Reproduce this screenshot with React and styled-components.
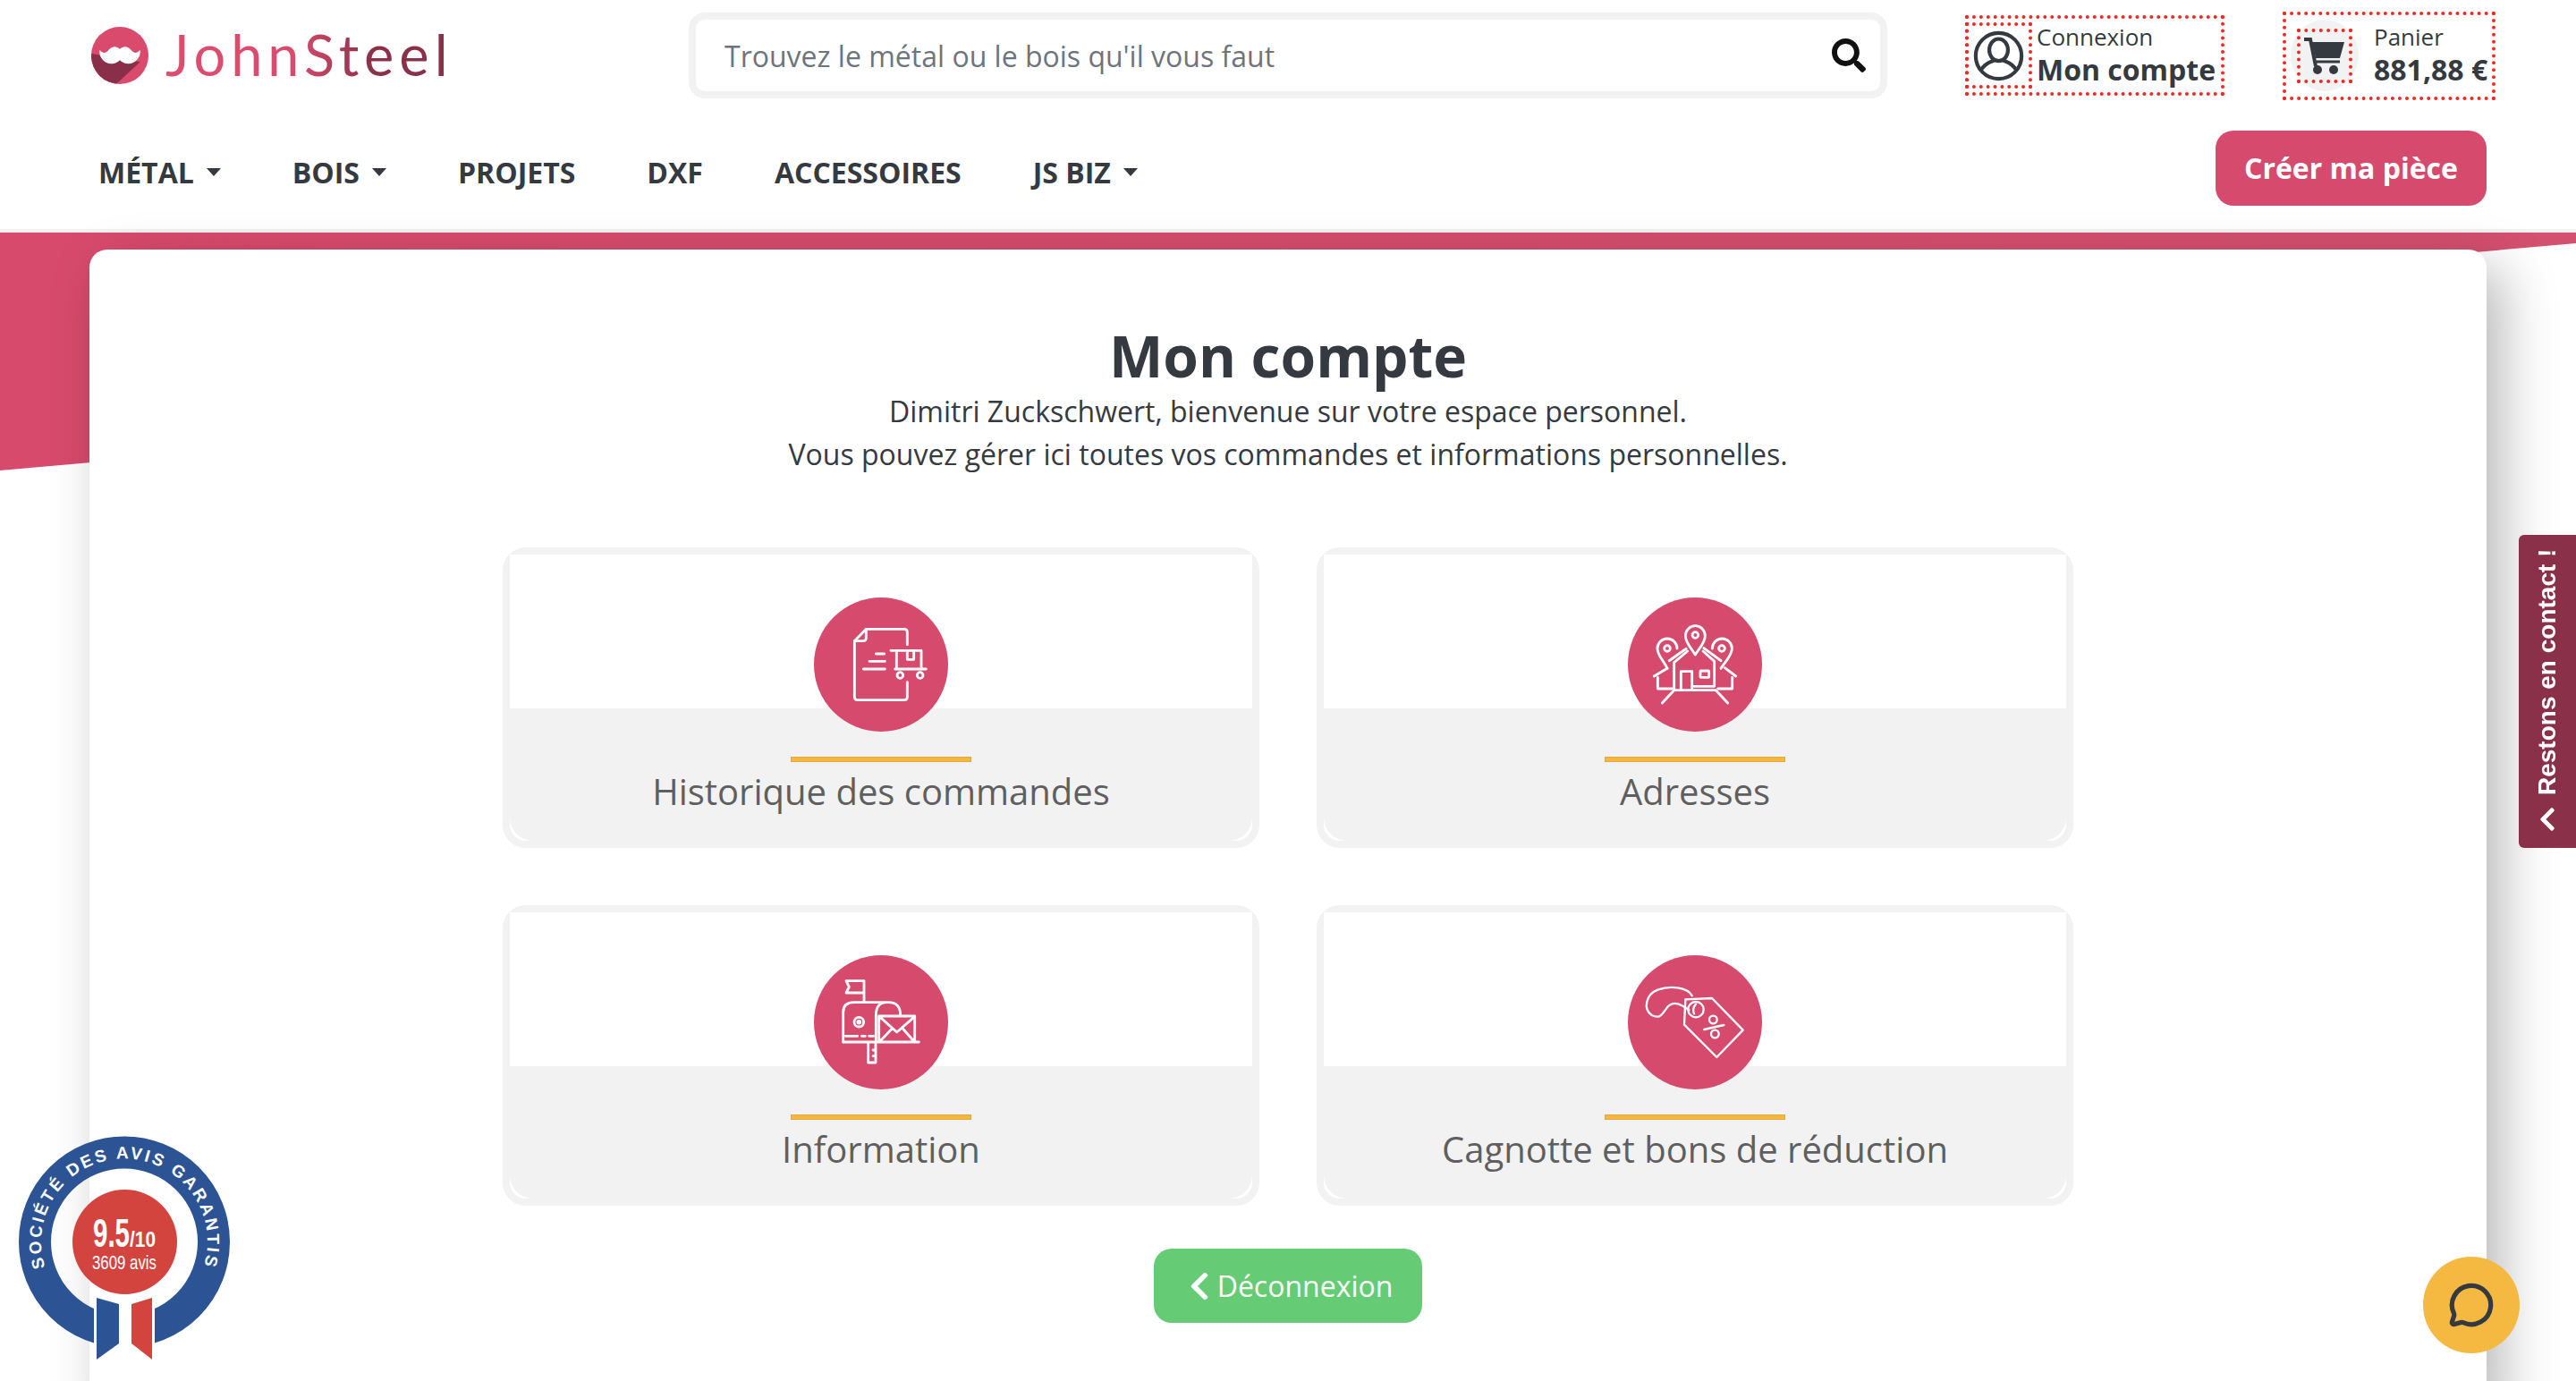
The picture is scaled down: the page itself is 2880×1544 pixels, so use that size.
import React from "react";
import styled, { createGlobalStyle } from "styled-components";
import { FaSearch, FaChevronLeft } from "react-icons/fa";
import { MessageCircle } from "lucide-react";

const Global = createGlobalStyle`
  * { box-sizing: border-box; }
  html, body { margin: 0; padding: 0; background: #fff; }
  body { font-family: "Open Sans", "Liberation Sans", sans-serif; color: #343a40; }
`;

const Page = styled.div`
  position: relative;
  width: 2880px;
  height: 1544px;
  overflow: hidden;
  background: #fff;
`;
const Header = styled.header`
  height: 260px;
  border-bottom: 4px solid #f2f2f2;
  background: #fff;
`;
const TopBar = styled.div`
  display: flex;
  align-items: center;
  height: 124px;
  padding-left: 102px;
`;
const Logo = styled.a`
  display: flex;
  align-items: center;
  gap: 19px;
  width: 668px;
`;
const LogoText = styled.span`
  font-family: "Lato", sans-serif;
  font-weight: 400;
  font-size: 63px;
  line-height: 62px;
  letter-spacing: 6px;
  padding-bottom: 3px;
  background: linear-gradient(90deg, #dd4d70 0%, #d94b6d 45%, #8a3149 72%, #8a3149 100%);
  -webkit-background-clip: text;
  background-clip: text;
  color: transparent;
`;
const Search = styled.div`
  display: flex;
  align-items: center;
  width: 1340px;
  height: 96px;
  border: 8px solid #f2f2f2;
  border-radius: 18px;
  padding: 0 16px 0 30px;
`;
const SearchInput = styled.input`
  flex: 1;
  border: 0;
  outline: 0;
  font: 400 32px "Open Sans", sans-serif;
  background: transparent;
  &::placeholder { color: #6c757d; opacity: 1; }
`;
const Account = styled.a`
  display: flex;
  align-items: center;
  width: 290px;
  height: 90px;
  margin-left: 87px;
  border: 4px dotted #f3281e;
`;
const AccountIcon = styled.span`
  display: flex;
  align-items: center;
  justify-content: center;
  width: 75px;
  height: 74px;
  margin-left: -4px;
  border: 4px dotted #f3281e;
  margin-right: 5px;
`;
const StackedText = styled.span`
  display: flex;
  flex-direction: column;
  padding-bottom: 3px;
  white-space: nowrap;
`;
const SmallLabel = styled.span`
  font-size: 26px;
  font-weight: 400;
  line-height: 34px;
  color: #343a40;
`;
const StrongLabel = styled.span`
  font-size: 32px;
  font-weight: 700;
  line-height: 40px;
  color: #343a40;
`;
const Cart = styled.a`
  display: flex;
  align-items: center;
  width: 238px;
  height: 99px;
  margin-left: 65px;
  padding-left: 5px;
  border: 4px dotted #f3281e;
`;
const CartDisc = styled.span`
  display: flex;
  align-items: center;
  justify-content: center;
  width: 76px;
  height: 80px;
  border-radius: 50%;
  background: #f2f2f2;
  margin-right: 17px;
  flex: none;
`;
const CartIconBox = styled.span`
  display: flex;
  align-items: center;
  justify-content: center;
  flex: none;
  width: 62px;
  height: 61px;
  border: 4px dotted #f3281e;
`;
const NavRow = styled.nav`
  display: flex;
  align-items: center;
  height: 132px;
  padding: 0 100px 0 110px;
`;
const NavList = styled.ul`
  display: flex;
  align-items: center;
  gap: 80px;
  list-style: none;
  margin: 0;
  padding: 5px 0 0;
  flex: 1;
`;
const NavItem = styled.li`
  display: flex;
  align-items: center;
  font-size: 32px;
  font-weight: 700;
  color: #343a40;
  white-space: nowrap;
`;
const Caret = styled.i`
  width: 0;
  height: 0;
  margin-left: 14px;
  border-top: 9px solid #343a40;
  border-left: 8px solid transparent;
  border-right: 8px solid transparent;
`;
const CreateButton = styled.a`
  display: flex;
  align-items: center;
  justify-content: center;
  width: 303px;
  height: 84px;
  margin-top: -5px;
  border-radius: 20px;
  background: #d64b6d;
  color: #fff;
  font-size: 32px;
  font-weight: 700;
`;
const Stage = styled.main`
  position: relative;
  padding: 19px 100px 0;
`;
const PinkWave = styled.div`
  position: absolute;
  left: 0;
  top: 0;
  width: 2880px;
  height: 266px;
  background: linear-gradient(90deg, #d84a6c, #d4506f);
  clip-path: polygon(0 0, 100% 0, 100% 12px, 0 100%);
`;
const Card = styled.section`
  position: relative;
  display: flex;
  flex-direction: column;
  align-items: center;
  height: 1300px;
  padding-top: 87px;
  border-radius: 20px 20px 0 0;
  background: #fff;
  box-shadow: 18px 20px 60px rgba(0, 0, 0, 0.28);
`;
const Title = styled.h1`
  margin: 0;
  font-size: 64px;
  line-height: 64px;
  font-weight: 700;
  color: #343a40;
`;
const Intro = styled.p`
  margin: 6px 0 0;
  font-size: 32px;
  line-height: 48px;
  text-align: center;
  color: #343a40;
`;
const Grid = styled.div`
  display: grid;
  grid-template-columns: 846px 846px;
  grid-auto-rows: 336px;
  gap: 64px;
  margin-top: 80px;
`;
const Tile = styled.a`
  display: block;
  border: 8px solid #f2f2f2;
  border-radius: 26px;
  background: #fff;
`;
const TileBody = styled.div`
  display: flex;
  flex-direction: column;
  align-items: center;
  height: 100%;
  padding-top: 48px;
  border-radius: 0 0 26px 26px;
  background: linear-gradient(#fff 172px, #f2f2f2 172px);
`;
const TileDisc = styled.span`
  display: block;
  width: 150px;
  height: 150px;
  border-radius: 50%;
  background: #d64b6d;
  svg { display: block; }
`;
const TileBar = styled.span`
  width: 202px;
  height: 6px;
  margin-top: 28px;
  background: #f4b740;
  border: 1px solid #e2a93c;
`;
const TileLabel = styled.span`
  margin-top: 5px;
  font-size: 40px;
  line-height: 56px;
  color: #5f5f5f;
`;
const LogoutButton = styled.a`
  display: flex;
  align-items: center;
  justify-content: center;
  gap: 2px;
  width: 300px;
  height: 83px;
  margin-top: 48px;
  border-radius: 20px;
  background: #65cb74;
  color: #fff;
  font-size: 32px;
`;
const ContactTab = styled.a`
  position: absolute;
  right: 0;
  top: 598px;
  display: flex;
  align-items: center;
  gap: 12px;
  width: 64px;
  height: 350px;
  padding: 17px 0 15px;
  justify-content: flex-start;
  writing-mode: vertical-rl;
  transform: rotate(180deg);
  border-radius: 0 6px 6px 0;
  background: #8a3149;
  color: #fff;
  font: 700 28px "Liberation Sans", Arial, sans-serif;
  white-space: nowrap;
`;
const TabChevron = styled.span`
  display: flex;
  transform: rotate(180deg);
  font-size: 30px;
`;
const ChatBubble = styled.a`
  position: absolute;
  left: 2709px;
  top: 1405px;
  display: flex;
  align-items: center;
  justify-content: center;
  width: 108px;
  height: 108px;
  border-radius: 50%;
  background: #f5b841;
  color: #343a40;
`;
const BadgeWrap = styled.div`
  position: absolute;
  left: 0;
  top: 1250px;
  width: 280px;
  height: 294px;
`;

const ICON_VIEW = "90 54 450 450";
const line = { fill: "none", stroke: "#fff", strokeWidth: 8.5, strokeLinecap: "round", strokeLinejoin: "round" };

const OrdersIcon = () => (
  <svg width="150" height="150" viewBox={ICON_VIEW} {...line}>
    <path d="M403 212V170Q403 160 393 160H265L226 200V388Q226 398 236 398H393Q403 398 403 388V338" />
    <path d="M265 160V190Q265 200 255 200H226" />
    <path d="M298 243H326M276 268H328M256 294H328" />
    <path d="M348 232H367V294M367 232H450V294M403 232V262H425V232M362 294H466" />
    <circle cx="379" cy="315" r="10" />
    <circle cx="446" cy="315" r="10" />
  </svg>
);
const AddressIcon = () => (
  <svg width="150" height="150" viewBox={ICON_VIEW} {...line}>
    <path d="M316 246C300 220 283 205 283 182A33 33 0 0 1 349 182C349 205 332 220 316 246Z" />
    <circle cx="316" cy="180" r="10" />
    <path d="M222 292C212 268 189 250 189 225A33 33 0 0 1 255 225" />
    <path d="M226 262L288 230" transform="rotate(-8 257 246)" />
    <circle cx="222" cy="225" r="10" />
    <path d="M402 292C416 268 439 250 439 225A33 33 0 0 0 373 225" />
    <path d="M342 228L405 262" transform="rotate(8 373 245)" />
    <circle cx="405" cy="225" r="10" />
    <path d="M290 234L245 272V365M342 234L380 268V352" />
    <path d="M205 408L245 365H385L425 408" />
    <path d="M268 362V302H305V362M310 352H378" />
    <rect x="333" y="300" width="29" height="22" rx="2" />
    <path d="M178 318L222 292M190 322V360H238M452 318L415 290M440 322V360H392" />
  </svg>
);
const MailIcon = () => (
  <svg width="150" height="150" viewBox={ICON_VIEW} {...line}>
    <path d="M258 210V140H198L208 160L198 180H258" />
    <path d="M188 345V245Q188 212 225 212H340Q380 212 380 255M298 345V255Q298 212 335 212" />
    <circle cx="241" cy="278" r="16" />
    <circle cx="241" cy="278" r="4" />
    <path d="M188 345H300M196 325H236M250 325H262M275 325H290" />
    <path d="M272 348V414H297V348M288 372H297M288 392H297" />
    <path d="M308 345V258H428V342M310 260L368 312L428 260M312 342L352 300M425 342L388 300M304 345H442" />
  </svg>
);
const TagIcon = () => (
  <svg width="150" height="150" viewBox={ICON_VIEW} {...line} strokeWidth="7">
    <path d="M283 202L372 198L476 305L388 396L279 287Z" />
    <circle cx="318" cy="236" r="26" />
    <path d="M305 190C290 160 230 155 190 170C150 185 140 235 170 255C200 270 205 250 225 225C245 205 270 220 295 238" />
    <path d="M318 218C308 228 308 242 312 250" />
    <circle cx="376" cy="270" r="13" />
    <circle cx="382" cy="318" r="13" />
    <path d="M346 303L412 288" />
  </svg>
);

const LogoMark = () => (
  <svg width="64" height="64" viewBox="0 0 62 62">
    <defs>
      <clipPath id="logoClip"><circle cx="31" cy="31" r="31" /></clipPath>
    </defs>
    <g clipPath="url(#logoClip)">
      <rect width="62" height="62" fill="#d94a6c" />
      <path d="M0 29L53 38L27 62H0Z" fill="#8a2f4a" />
      <path d="M31 24C27 20 22 21 19 25C16 29 12 29 9 25C8 33 14 40 22 40C26 40 29 38 31 36C33 38 36 40 40 40C48 40 54 33 53 25C50 29 46 29 43 25C40 21 35 20 31 24Z" fill="#fff" />
    </g>
  </svg>
);

const UserIcon = () => (
  <svg width="57" height="57" viewBox="0 0 60 60" fill="none" stroke="#343a40" strokeWidth="4.4">
    <circle cx="30" cy="30" r="27" />
    <ellipse cx="30" cy="23" rx="11" ry="13" />
    <path d="M9 47C15 37 22 37 25 35M51 47C45 37 38 37 35 35" />
  </svg>
);

const CartGlyph = () => (
  <svg width="46" height="41" viewBox="0 0 46 41">
    <path d="M0 2H7L13 32" fill="none" stroke="#343a40" strokeWidth="4" />
    <path d="M9 5H45L40 23H13Z" fill="#343a40" />
    <path d="M14 27H40" stroke="#343a40" strokeWidth="3" />
    <circle cx="15" cy="36" r="5" fill="#343a40" />
    <circle cx="33" cy="36" r="5" fill="#343a40" />
  </svg>
);

const ReviewBadge = () => (
  <svg width="280" height="294" viewBox="0 0 280 294">
    <defs>
      <path id="ringPath" d="M79.2 209.7A93 93 0 1 1 198.8 209.7" />
    </defs>
    <circle cx="139" cy="138.5" r="100" fill="none" stroke="#2c5495" strokeWidth="36" />
    <rect x="105" y="190" width="68" height="70" fill="#fff" />
    <text fontFamily="Liberation Sans, sans-serif" fontWeight="700" fontSize="19" fill="#fff" letterSpacing="2.8">
      <textPath href="#ringPath" startOffset="50%" textAnchor="middle">SOCIÉTÉ DES AVIS GARANTIS</textPath>
    </text>
    <circle cx="139.5" cy="138.5" r="58.5" fill="#d3443f" />
    <text x="104" y="144" fontFamily="Liberation Sans, sans-serif" fontWeight="700" fontSize="44" fill="#fff" textLength="41" lengthAdjust="spacingAndGlyphs">9.5</text>
    <text x="145" y="144" fontFamily="Liberation Sans, sans-serif" fontWeight="700" fontSize="23" fill="#fff" textLength="29" lengthAdjust="spacingAndGlyphs">/10</text>
    <text x="103" y="169" fontFamily="Liberation Sans, sans-serif" fontSize="22" fill="#fff" textLength="72" lengthAdjust="spacingAndGlyphs">3609 avis</text>
    <path d="M108 201L133 208V252L108 270Z" fill="#2c5495" />
    <path d="M147 208L170 201V270L147 252Z" fill="#d3443f" />
  </svg>
);

const tiles = [
  { label: "Historique des commandes", Icon: OrdersIcon },
  { label: "Adresses", Icon: AddressIcon },
  { label: "Information", Icon: MailIcon },
  { label: "Cagnotte et bons de réduction", Icon: TagIcon },
];
const nav = [
  { label: "MÉTAL", caret: true },
  { label: "BOIS", caret: true },
  { label: "PROJETS" },
  { label: "DXF" },
  { label: "ACCESSOIRES" },
  { label: "JS BIZ", caret: true },
];

export default function App() {
  return (
    <Page>
      <Global />
      <Header>
        <TopBar>
          <Logo>
            <LogoMark />
            <LogoText>JohnSteel</LogoText>
          </Logo>
          <Search>
            <SearchInput placeholder="Trouvez le métal ou le bois qu'il vous faut" />
            <FaSearch size={38} color="#111" />
          </Search>
          <Account>
            <AccountIcon><UserIcon /></AccountIcon>
            <StackedText>
              <SmallLabel>Connexion</SmallLabel>
              <StrongLabel>Mon compte</StrongLabel>
            </StackedText>
          </Account>
          <Cart>
            <CartDisc>
              <CartIconBox><CartGlyph /></CartIconBox>
            </CartDisc>
            <StackedText>
              <SmallLabel>Panier</SmallLabel>
              <StrongLabel>881,88 €</StrongLabel>
            </StackedText>
          </Cart>
        </TopBar>
        <NavRow>
          <NavList>
            {nav.map((n) => (
              <NavItem key={n.label}>
                {n.label}
                {n.caret && <Caret />}
              </NavItem>
            ))}
          </NavList>
          <CreateButton>Créer ma pièce</CreateButton>
        </NavRow>
      </Header>
      <Stage>
        <PinkWave />
        <Card>
          <Title>Mon compte</Title>
          <Intro>
            Dimitri Zuckschwert, bienvenue sur votre espace personnel.
            <br />
            Vous pouvez gérer ici toutes vos commandes et informations personnelles.
          </Intro>
          <Grid>
            {tiles.map(({ label, Icon }) => (
              <Tile key={label}>
                <TileBody>
                  <TileDisc><Icon /></TileDisc>
                  <TileBar />
                  <TileLabel>{label}</TileLabel>
                </TileBody>
              </Tile>
            ))}
          </Grid>
          <LogoutButton>
            <FaChevronLeft size={36} />
            Déconnexion
          </LogoutButton>
        </Card>
      </Stage>
      <ContactTab>
        <TabChevron><FaChevronLeft /></TabChevron>
        Restons en contact !
      </ContactTab>
      <ChatBubble><MessageCircle size={52} strokeWidth={2.4} /></ChatBubble>
      <BadgeWrap><ReviewBadge /></BadgeWrap>
    </Page>
  );
}
